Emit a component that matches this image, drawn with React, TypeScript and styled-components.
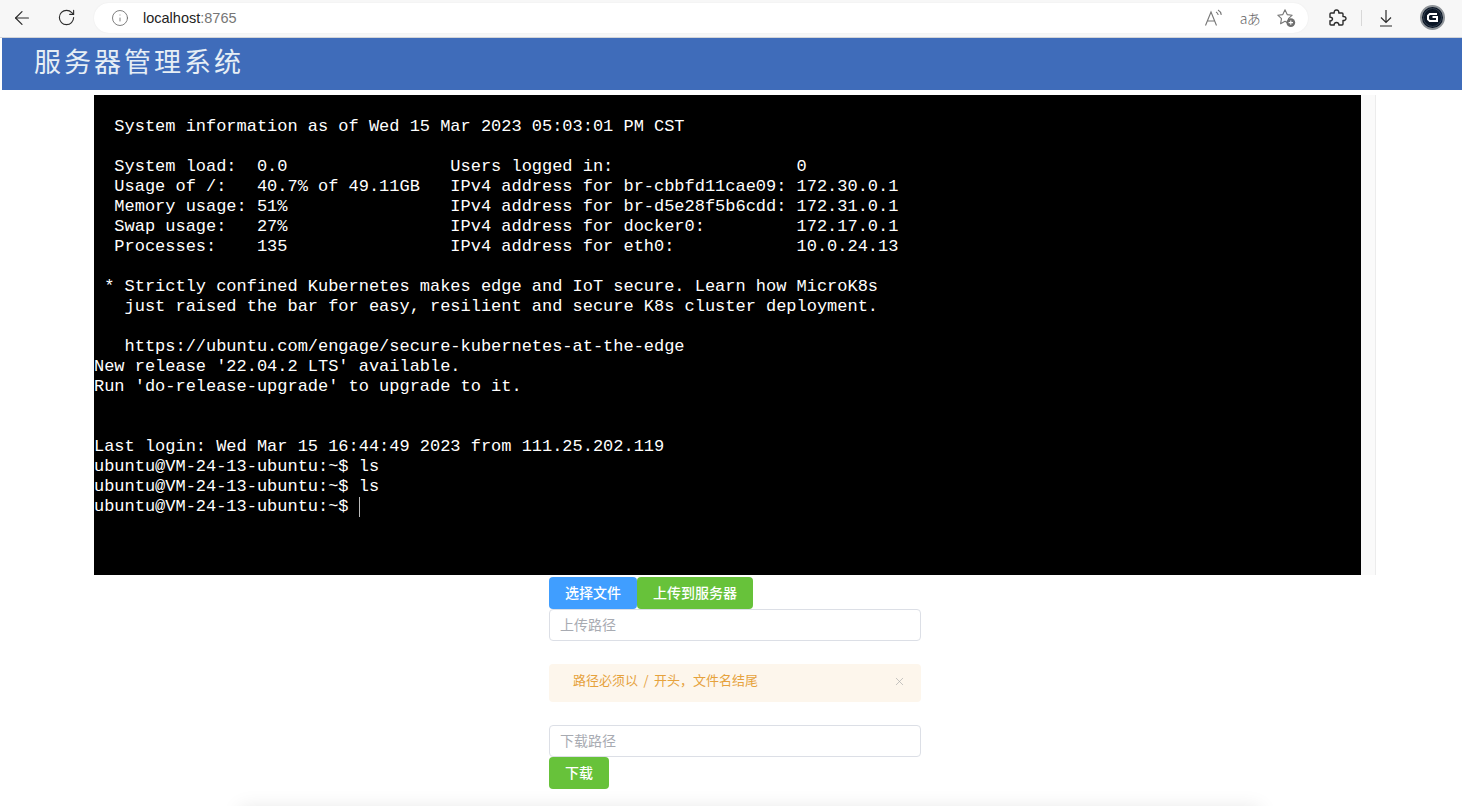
import React from 'react';
import styled, { createGlobalStyle } from 'styled-components';
import { ArrowLeft, Info, RotateCw, X } from 'lucide-react';

const GlobalStyle = createGlobalStyle`
  html, body {
    margin: 0;
    padding: 0;
    height: 806px;
    overflow: hidden;
    background: #fff;
    font-family: "Liberation Sans", "Noto Sans CJK SC", sans-serif;
  }
  * {
    box-sizing: border-box;
  }
`;

const BrowserBar = styled.div`
  display: flex;
  align-items: center;
  height: 38px;
  padding-bottom: 2px;
  background: #f7f7f7;
  border-bottom: 1px solid #d2d4d8;
`;

const ToolSlot = styled.div`
  display: flex;
  align-items: center;
  justify-content: center;
  flex: none;
  width: 44px;
  height: 30px;
  color: #2b2b2b;
`;

const AddressPill = styled.div`
  display: flex;
  align-items: center;
  flex: 1;
  height: 30px;
  margin-left: 6px;
  padding: 0 4px 0 17px;
  background: #fff;
  border-radius: 15px;
  box-shadow: 0 0 2px rgba(0, 0, 0, 0.06);
`;

const Url = styled.span`
  margin-left: 14px;
  font-size: 14.5px;
  color: #222;
`;

const UrlPort = styled.span`
  color: #767676;
`;

const PillActions = styled.div`
  display: flex;
  margin-left: auto;
`;

const PillSlot = styled.div`
  display: flex;
  align-items: center;
  justify-content: center;
  width: 36px;
  height: 30px;
  color: #777;
`;

const TranslateGlyph = styled.span`
  font-family: "Noto Sans CJK JP", sans-serif;
  font-size: 14px;
  font-weight: 300;
  letter-spacing: -0.5px;
  color: #666;
`;

const BarActions = styled.div`
  display: flex;
  align-items: center;
  flex: none;
  padding-right: 12px;
`;

const BarSlot = styled.div<{ $gap: number }>`
  display: flex;
  align-items: center;
  justify-content: center;
  width: 36px;
  height: 30px;
  margin-left: ${(p) => p.$gap}px;
  color: #2b2b2b;
`;

const BarDivider = styled.div`
  width: 1px;
  height: 16px;
  margin-left: 6px;
  background: #d8d8d8;
`;

const Header = styled.header`
  display: flex;
  align-items: center;
  height: 52px;
  margin-left: 2px;
  padding: 0 0 8px 32px;
  background: #3f6cba;
`;

const Title = styled.h1`
  margin: 0;
  font-family: "Noto Sans CJK SC", sans-serif;
  font-size: 27px;
  font-weight: 400;
  letter-spacing: 3px;
  color: #e6eef5;
`;

const Main = styled.main`
  width: 1282px;
  margin: 5px 0 0 94px;
`;

const TerminalFrame = styled.div`
  display: flex;
  height: 480px;
`;

const Terminal = styled.pre`
  flex: 1;
  height: 100%;
  margin: 0;
  padding-top: 2px;
  overflow: hidden;
  background: #000;
  font-family: "Liberation Mono", monospace;
  font-size: 17px;
  line-height: 20px;
  letter-spacing: -0.02px;
  color: #fff;
`;

const Cursor = styled.span`
  display: inline-block;
  width: 1px;
  height: 20px;
  vertical-align: top;
  background: #bbb;
`;

const Scrollbar = styled.div`
  flex: none;
  width: 15px;
  background: #fafafa;
  border-right: 1px solid #ececec;
`;

const Form = styled.section`
  display: flex;
  flex-direction: column;
  align-items: flex-start;
  width: 372px;
  margin: 2px auto 0;
`;

const ButtonRow = styled.div`
  display: flex;
`;

const Button = styled.button<{ $tone: 'blue' | 'green' }>`
  height: 32px;
  padding: 0 16px 2px;
  border: none;
  border-radius: 4px;
  background: ${(p) => (p.$tone === 'blue' ? '#409eff' : '#67c23a')};
  font-family: "Noto Sans CJK SC", sans-serif;
  font-size: 14px;
  font-weight: 500;
  color: #fff;
`;

const PathInput = styled.input`
  width: 100%;
  height: 32px;
  padding: 0 10px 2px;
  background: #fff;
  border: 1px solid #dcdfe6;
  border-radius: 4px;
  outline: none;
  font-family: "Noto Sans CJK SC", sans-serif;
  font-size: 14px;
  &::placeholder {
    color: #a8abb2;
  }
`;

const Alert = styled.div`
  display: flex;
  justify-content: space-between;
  width: 100%;
  height: 38px;
  margin: 23px 0;
  padding: 7px 15px 0 24px;
  background: #fdf6ec;
  border-radius: 4px;
  font-family: "Noto Sans CJK SC", sans-serif;
  font-size: 13px;
  line-height: 18px;
  word-spacing: 2.5px;
  color: #e6a23c;
`;

const AlertClose = styled.span`
  display: flex;
  align-items: center;
  height: 20px;
  color: #a8a8a8;
`;

const BottomFade = styled.div`
  position: absolute;
  left: 200px;
  bottom: 0;
  width: 1100px;
  height: 20px;
  overflow: hidden;
`;

const BottomShadow = styled.div`
  height: 60px;
  margin: 22px 40px 0;
  background: #f2f2f2;
  box-shadow: 0 0 20px rgba(0, 0, 0, 0.1);
`;

const terminalLines = [
  '',
  '  System information as of Wed 15 Mar 2023 05:03:01 PM CST',
  '',
  '  System load:  0.0                Users logged in:                  0',
  '  Usage of /:   40.7% of 49.11GB   IPv4 address for br-cbbfd11cae09: 172.30.0.1',
  '  Memory usage: 51%                IPv4 address for br-d5e28f5b6cdd: 172.31.0.1',
  '  Swap usage:   27%                IPv4 address for docker0:         172.17.0.1',
  '  Processes:    135                IPv4 address for eth0:            10.0.24.13',
  '',
  ' * Strictly confined Kubernetes makes edge and IoT secure. Learn how MicroK8s',
  '   just raised the bar for easy, resilient and secure K8s cluster deployment.',
  '',
  '   https://ubuntu.com/engage/secure-kubernetes-at-the-edge',
  "New release '22.04.2 LTS' available.",
  "Run 'do-release-upgrade' to upgrade to it.",
  '',
  '',
  'Last login: Wed Mar 15 16:44:49 2023 from 111.25.202.119',
  'ubuntu@VM-24-13-ubuntu:~$ ls',
  'ubuntu@VM-24-13-ubuntu:~$ ls',
  'ubuntu@VM-24-13-ubuntu:~$ ',
].join('\n');

const ReadAloudIcon = () => (
  <svg width="20" height="18" viewBox="0 0 20 18" fill="none" stroke="currentColor" strokeWidth="1.1">
    <path d="M1.5 16.5 7 3l5.5 13.5M3.3 12h7.4" />
    <path d="M12 3c1.2.6 2 1.7 2.2 3M14 1c1.9 1 3 2.7 3.3 4.8" />
  </svg>
);

const FavoriteIcon = () => (
  <svg width="20" height="20" viewBox="0 0 20 20" fill="none">
    <path
      d="M9 1.8 11.2 6.6l5 .6-3.7 3.5.9 5-4.4-2.5-4.4 2.5.9-5L1.8 7.2l5-.6z"
      stroke="currentColor"
      strokeWidth="1.1"
      strokeLinejoin="round"
    />
    <circle cx="14.8" cy="14.6" r="4.4" fill="#6f6f6f" />
    <path d="M14.8 12.4v4.4M12.6 14.6H17" stroke="#fff" strokeWidth="1.1" />
  </svg>
);

const ExtensionsIcon = () => (
  <svg width="20" height="20" viewBox="0 0 20 20" fill="none" stroke="currentColor" strokeWidth="1.4" strokeLinejoin="round">
    <path d="M3 6q0-1 1-1h3.2C7 3.6 7.6 2 9.5 2s2.5 1.6 2.3 3H15q1 0 1 1v2.5c1.5-.3 3 .5 3 2s-1.5 2.3-3 2V16q0 1-1 1h-3.2c.2-1.5-.6-2.5-2.3-2.5S7 15.500 7.200 17H4q-1 0-1-1v-3.200c1.300.2 2.500-.6 2.500-1.800S4.300 9 3 9.200z" />
  </svg>
);

const DownloadIcon = () => (
  <svg width="16" height="18" viewBox="0 0 16 18" fill="none" stroke="currentColor" strokeWidth="1.2">
    <path d="M8 1v12M3 8.5 8 13.5l5-5M2 17h12" />
  </svg>
);

const AvatarIcon = () => (
  <svg width="25" height="25" viewBox="0 0 25 25">
    <circle cx="12.5" cy="12.5" r="11.5" fill="#0b1626" stroke="#8e9398" strokeWidth="2" />
    <circle cx="12.5" cy="12.5" r="9" fill="none" stroke="#33404f" strokeWidth="1" />
    <path d="M17 9H9.8L8 10.6v3.8L9.8 16H17v-4h-4.5" fill="none" stroke="#fff" strokeWidth="2" />
  </svg>
);

const App = () => {
  return (
    <>
      <GlobalStyle />
      <BrowserBar>
        <ToolSlot>
          <ArrowLeft size={22} strokeWidth={1.3} />
        </ToolSlot>
        <ToolSlot>
          <RotateCw size={19} strokeWidth={1.4} />
        </ToolSlot>
        <AddressPill>
          <Info size={18} strokeWidth={1.1} color="#666" />
          <Url>
            localhost<UrlPort>:8765</UrlPort>
          </Url>
          <PillActions>
            <PillSlot>
              <ReadAloudIcon />
            </PillSlot>
            <PillSlot>
              <TranslateGlyph>aあ</TranslateGlyph>
            </PillSlot>
            <PillSlot>
              <FavoriteIcon />
            </PillSlot>
          </PillActions>
        </AddressPill>
        <BarActions>
          <BarSlot $gap={11}>
            <ExtensionsIcon />
          </BarSlot>
          <BarDivider />
          <BarSlot $gap={6}>
            <DownloadIcon />
          </BarSlot>
          <BarSlot $gap={10}>
            <AvatarIcon />
          </BarSlot>
        </BarActions>
      </BrowserBar>
      <Header>
        <Title>服务器管理系统</Title>
      </Header>
      <Main>
        <TerminalFrame>
          <Terminal>
            {terminalLines}
            <Cursor />
          </Terminal>
          <Scrollbar />
        </TerminalFrame>
        <Form>
          <ButtonRow>
            <Button $tone="blue">选择文件</Button>
            <Button $tone="green">上传到服务器</Button>
          </ButtonRow>
          <PathInput placeholder="上传路径" />
          <Alert>
            <span>路径必须以 / 开头，文件名结尾</span>
            <AlertClose>
              <X size={13} strokeWidth={1.2} />
            </AlertClose>
          </Alert>
          <PathInput placeholder="下载路径" />
          <Button $tone="green">下载</Button>
        </Form>
      </Main>
      <BottomFade>
        <BottomShadow />
      </BottomFade>
    </>
  );
};

export default App;
